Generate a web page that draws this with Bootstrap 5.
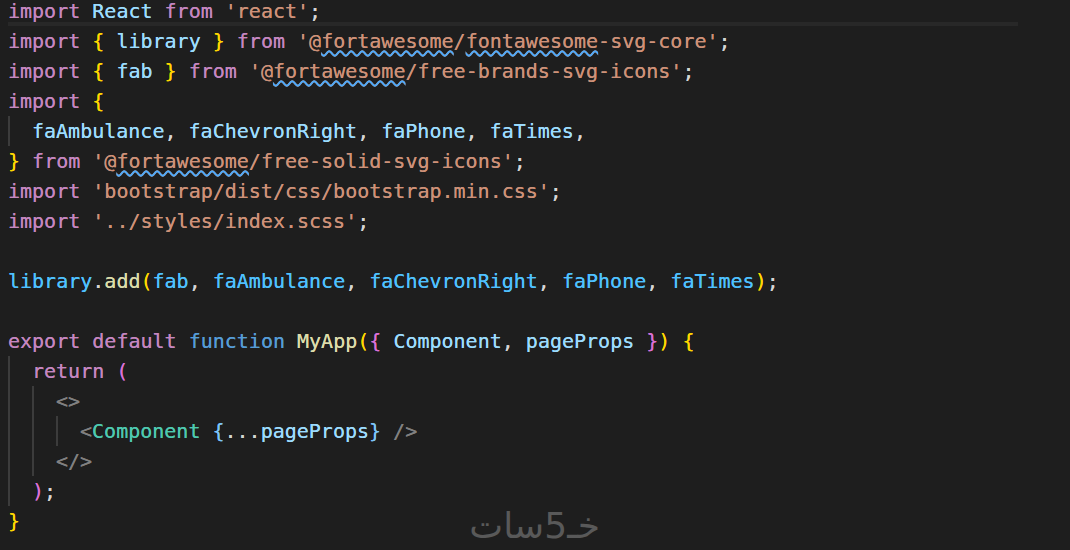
<!DOCTYPE html>
<html lang="en">
<head>
<meta charset="utf-8">
<title>_app.js</title>
<link href="https://cdn.jsdelivr.net/npm/bootstrap@5.3.0/dist/css/bootstrap.min.css" rel="stylesheet">
<script src="https://cdn.jsdelivr.net/npm/bootstrap@5.3.0/dist/js/bootstrap.bundle.min.js"></script>
<style>
html, body { height: 100%; overflow: hidden; background: #1e1e1e; }
.editor-pane { height: 550px; overflow: hidden; background: #1e1e1e; color: #d4d4d4; font-family: "DejaVu Sans Mono", monospace; font-size: 20px; line-height: 30px; text-shadow: 0 0 .6px currentColor; }
.code-flow { margin-top: -4px; padding-left: 8px; }
.code-line { height: 30px; white-space: pre; }
.code-line.current { position: relative; }
.code-line.current::after { content: ""; position: absolute; left: 0; bottom: 0; width: 1010px; height: 4px; background: #282828; }
.guide { border-left: 2px solid #3c3c3c; padding-left: 22px; }
.k { color: #c586c0; } .v { color: #9cdcfe; } .s { color: #ce9178; } .y { color: #ffd700; }
.f { color: #dcdcaa; } .c { color: #4fc1ff; } .b { color: #569cd6; } .p { color: #da70d6; }
.t { color: #808080; } .g { color: #4ec9b0; } .u { color: #7cc4f8; }
.sq { text-decoration: underline wavy #4daafc 1.5px; text-underline-offset: 2px; text-decoration-skip-ink: none; }
.wm { position: absolute; left: 470px; width: 130px; top: 503px; color: #595959; font-family: "DejaVu Sans", sans-serif; font-size: 36px; line-height: 46px; white-space: nowrap; text-align: right; }
</style>
</head>
<body class="position-relative m-0">
<main class="editor-pane">
<div class="code-flow">
<div class="code-line current"><span class="k">import</span> <span class="v">React</span> <span class="k">from</span> <span class="s">'react'</span>;</div>
<div class="code-line"><span class="k">import</span> <span class="y">{</span> <span class="v">library</span> <span class="y">}</span> <span class="k">from</span> <span class="s">'@<span class="sq">fortawesome</span>/<span class="sq">fontawesome</span>-svg-core'</span>;</div>
<div class="code-line"><span class="k">import</span> <span class="y">{</span> <span class="v">fab</span> <span class="y">}</span> <span class="k">from</span> <span class="s">'@<span class="sq">fortawesome</span>/free-brands-svg-icons'</span>;</div>
<div class="code-line"><span class="k">import</span> <span class="y">{</span></div>
<div class="guide"><div class="code-line"><span class="v">faAmbulance</span>, <span class="v">faChevronRight</span>, <span class="v">faPhone</span>, <span class="v">faTimes</span>,</div></div>
<div class="code-line"><span class="y">}</span> <span class="k">from</span> <span class="s">'@<span class="sq">fortawesome</span>/free-solid-svg-icons'</span>;</div>
<div class="code-line"><span class="k">import</span> <span class="s">'bootstrap/dist/css/bootstrap.min.css'</span>;</div>
<div class="code-line"><span class="k">import</span> <span class="s">'../styles/index.scss'</span>;</div>
<div class="code-line"></div>
<div class="code-line"><span class="c">library</span>.<span class="f">add</span><span class="y">(</span><span class="c">fab</span>, <span class="c">faAmbulance</span>, <span class="c">faChevronRight</span>, <span class="c">faPhone</span>, <span class="c">faTimes</span><span class="y">)</span>;</div>
<div class="code-line"></div>
<div class="code-line"><span class="k">export</span> <span class="k">default</span> <span class="b">function</span> <span class="f">MyApp</span><span class="y">(</span><span class="p">{</span> <span class="v">Component</span>, <span class="v">pageProps</span> <span class="p">}</span><span class="y">)</span> <span class="y">{</span></div>
<div class="guide">
<div class="code-line"><span class="k">return</span> <span class="p">(</span></div>
<div class="guide">
<div class="code-line"><span class="t">&lt;&gt;</span></div>
<div class="guide"><div class="code-line"><span class="t">&lt;</span><span class="g">Component</span> <span class="u">{</span>...<span class="v">pageProps</span><span class="u">}</span> <span class="t">/&gt;</span></div></div>
<div class="code-line"><span class="t">&lt;/&gt;</span></div>
</div>
<div class="code-line"><span class="p">)</span>;</div>
</div>
<div class="code-line"><span class="y">}</span></div>
</div>
</main>
<div class="wm" dir="rtl">خـ5سات</div>
</body>
</html>
